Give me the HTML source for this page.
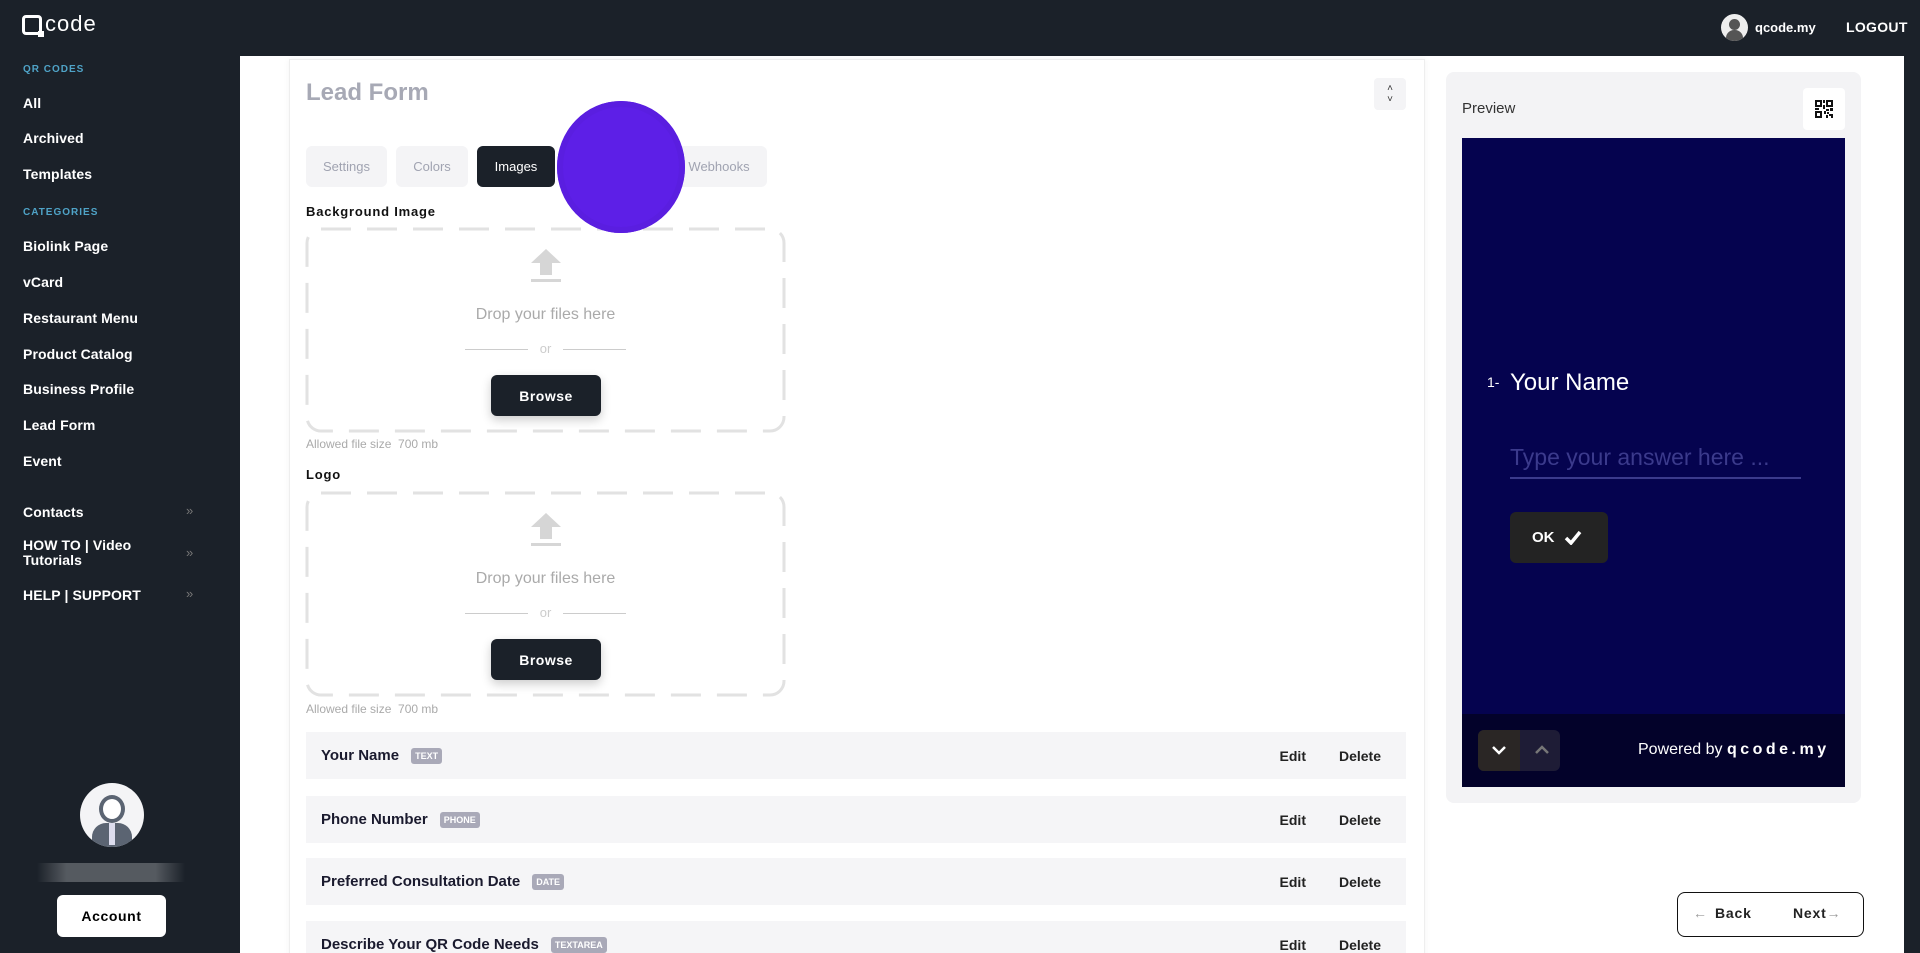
<!DOCTYPE html>
<html style="overflow:hidden"><head><meta charset="utf-8"><style>
*{box-sizing:border-box;margin:0;padding:0}
html,body{width:1920px;height:953px;overflow:hidden}
body{background:#fff;font-family:"Liberation Sans",sans-serif;position:relative}
.a{position:absolute}
.top{left:0;top:0;width:1920px;height:56px;background:#1b2129}
.side{left:0;top:0;width:240px;height:953px;background:#1b2129}
.rs{left:1904px;top:0;width:16px;height:953px;background:#1b2129}
.si{left:23px;color:#fff;font-size:14px;font-weight:bold;letter-spacing:.1px}
.sh{left:23px;color:#4fa3c7;font-size:10px;font-weight:bold;letter-spacing:1px}
.chev{left:186px;color:#777;font-size:13px}
.card{left:289px;top:59px;width:1136px;height:900px;border:1px solid #eee;box-shadow:0 0 6px rgba(0,0,0,.05);background:#fff}
.tab{top:146px;height:41px;border-radius:6px;background:#f4f4f6;color:#a0a3b1;font-size:13px;display:flex;align-items:center;justify-content:center}
.lbl{left:306px;font-size:13px;font-weight:bold;color:#111;letter-spacing:.8px}
.drop{left:306px;width:479px;text-align:center;color:#aaa;font-size:16px}
.br{left:491px;width:110px;height:41px;background:#1b2129;color:#fff;border-radius:6px;font-weight:bold;font-size:14px;display:flex;align-items:center;justify-content:center;box-shadow:0 4px 10px rgba(0,0,0,.2);letter-spacing:.5px}
.al{left:306px;font-size:12px;color:#aaa}
.row{left:306px;width:1100px;height:47px;background:#f5f5f7;display:flex;align-items:center;padding-left:15px}
.row b{font-size:15px;color:#1a1a2e}
.bd{background:#a9a9b8;color:#fff;font-size:9px;font-weight:bold;padding:3px 4px;border-radius:3px;margin-left:12px}
.ed{position:absolute;right:100px;font-size:14px;font-weight:bold;color:#222}
.de{position:absolute;right:25px;font-size:14px;font-weight:bold;color:#222}
</style></head><body>
<div class="a top"></div>
<div class="a side"></div>
<div class="a rs"></div>
<div class="a" style="left:22px;top:15px;width:20px;height:20px;border:3px solid #fff;border-radius:4px"></div>
<div class="a" style="left:38px;top:31px;width:6px;height:6px;background:#fff"></div>
<div class="a" style="left:45px;top:11px;color:#fff;font-size:22px;letter-spacing:1px">code</div>
<div class="a sh" style="top:64px">QR CODES</div>
<div class="a si" style="top:95px">All</div>
<div class="a si" style="top:130px">Archived</div>
<div class="a si" style="top:166px">Templates</div>
<div class="a sh" style="top:207px">CATEGORIES</div>
<div class="a si" style="top:238px">Biolink Page</div>
<div class="a si" style="top:274px">vCard</div>
<div class="a si" style="top:310px">Restaurant Menu</div>
<div class="a si" style="top:346px">Product Catalog</div>
<div class="a si" style="top:381px">Business Profile</div>
<div class="a si" style="top:417px">Lead Form</div>
<div class="a si" style="top:453px">Event</div>
<div class="a si" style="top:504px">Contacts</div><div class="a chev" style="top:503px">»</div>
<div class="a si" style="top:538px;line-height:15px">HOW TO | Video<br>Tutorials</div><div class="a chev" style="top:545px">»</div>
<div class="a si" style="top:587px">HELP | SUPPORT</div><div class="a chev" style="top:586px">»</div>
<div class="a" style="left:80px;top:783px;width:64px;height:64px;border-radius:50%;background:#f4f4f6;overflow:hidden">
<div class="a" style="left:19px;top:12px;width:26px;height:28px;border-radius:50%;background:#fff;border:4px solid #5b6472"></div>
<div class="a" style="left:12px;top:40px;width:40px;height:24px;border-radius:14px 14px 0 0;background:#5b6472"></div>
<div class="a" style="left:29px;top:40px;width:6px;height:22px;background:#dde"></div></div>
<div class="a" style="left:37px;top:863px;width:148px;height:19px;background:linear-gradient(90deg,#1b2129,#555a60 20%,#555a60 80%,#1b2129)"></div>
<div class="a" style="left:57px;top:895px;width:109px;height:42px;background:#fff;border-radius:6px;display:flex;align-items:center;justify-content:center;font-weight:bold;font-size:14px;letter-spacing:.6px">Account</div>
<div class="a" style="left:1721px;top:14px;width:27px;height:27px;border-radius:50%;background:#eee;overflow:hidden"><div class="a" style="left:8px;top:5px;width:11px;height:11px;border-radius:50%;background:#555"></div><div class="a" style="left:5px;top:16px;width:17px;height:12px;border-radius:8px 8px 0 0;background:#555"></div></div>
<div class="a" style="left:1755px;top:20px;color:#fff;font-weight:bold;font-size:13px">qcode.my</div>
<div class="a" style="left:1846px;top:19px;color:#fff;font-weight:bold;font-size:14px;letter-spacing:.3px">LOGOUT</div>
<div class="a card"></div>
<div class="a" style="left:306px;top:79px;font-size:24px;font-weight:bold;color:#a7a9b5">Lead Form</div>
<div class="a" style="left:1374px;top:78px;width:32px;height:32px;background:#f4f4f6;border-radius:4px;text-align:center;font-size:10px;line-height:11px;padding-top:5px;color:#333">˄<br>˅</div>
<div class="a tab" style="left:306px;width:81px">Settings</div>
<div class="a tab" style="left:396px;width:72px">Colors</div>
<div class="a tab" style="left:477px;width:78px;background:#1b2129;color:#fff">Images</div>
<div class="a tab" style="left:567px;width:97px"></div>
<div class="a tab" style="left:671px;width:96px">Webhooks</div>
<div class="a lbl" style="top:204px">Background Image</div>
<svg class="a" style="left:305px;top:227px" width="482" height="207"><rect x="2" y="2" width="477" height="202" rx="14" fill="none" stroke="#e2e2e2" stroke-width="3" stroke-dasharray="30 16"/></svg>
<svg class="a" style="left:531px;top:249px" width="30" height="34" viewBox="0 0 30 34"><path d="M15 0 L30 14 L21 14 L21 26 L9 26 L9 14 L0 14Z" fill="#d6d6d6"/><rect x="0" y="30" width="30" height="3" fill="#d6d6d6"/></svg>
<div class="a drop" style="top:306px">Drop your files here</div>
<div class="a" style="left:465px;top:349px;width:63px;height:1px;background:#ccc"></div>
<div class="a" style="left:563px;top:349px;width:63px;height:1px;background:#ccc"></div>
<div class="a drop" style="top:341px;font-size:13px;color:#ccc">or</div>
<div class="a br" style="top:375px">Browse</div>
<div class="a al" style="top:437px">Allowed file size &nbsp;700 mb</div>
<div class="a lbl" style="top:467px">Logo</div>
<svg class="a" style="left:305px;top:491px" width="482" height="207"><rect x="2" y="2" width="477" height="202" rx="14" fill="none" stroke="#e2e2e2" stroke-width="3" stroke-dasharray="30 16"/></svg>
<svg class="a" style="left:531px;top:513px" width="30" height="34" viewBox="0 0 30 34"><path d="M15 0 L30 14 L21 14 L21 26 L9 26 L9 14 L0 14Z" fill="#d6d6d6"/><rect x="0" y="30" width="30" height="3" fill="#d6d6d6"/></svg>
<div class="a drop" style="top:570px">Drop your files here</div>
<div class="a" style="left:465px;top:613px;width:63px;height:1px;background:#ccc"></div>
<div class="a" style="left:563px;top:613px;width:63px;height:1px;background:#ccc"></div>
<div class="a drop" style="top:605px;font-size:13px;color:#ccc">or</div>
<div class="a br" style="top:639px">Browse</div>
<div class="a al" style="top:702px">Allowed file size &nbsp;700 mb</div>
<div class="a" style="left:557px;top:101px;width:128px;height:132px;border-radius:50%;background:#5d1fe7;box-shadow:inset 0 0 0 6px #5a1ee0"></div>
<div class="a row" style="top:732px"><b>Your Name</b><span class="bd">TEXT</span><span class="ed">Edit</span><span class="de">Delete</span></div>
<div class="a row" style="top:796px"><b>Phone Number</b><span class="bd">PHONE</span><span class="ed">Edit</span><span class="de">Delete</span></div>
<div class="a row" style="top:858px"><b>Preferred Consultation Date</b><span class="bd">DATE</span><span class="ed">Edit</span><span class="de">Delete</span></div>
<div class="a row" style="top:921px"><b>Describe Your QR Code Needs</b><span class="bd">TEXTAREA</span><span class="ed">Edit</span><span class="de">Delete</span></div>
<div class="a" style="left:1446px;top:72px;width:415px;height:731px;background:#f3f3f5;border-radius:8px"></div>
<div class="a" style="left:1462px;top:100px;font-size:15px;color:#333">Preview</div>
<div class="a" style="left:1803px;top:88px;width:42px;height:42px;background:#fff;border-radius:4px"></div>
<svg class="a" style="left:1815px;top:100px" width="18" height="18" viewBox="0 0 18 18" fill="#111"><path d="M0 0h7v7H0zM2 2v3h3V2zM11 0h7v7h-7zM13 2v3h3V2zM0 11h7v7H0zM2 13v3h3v-3zM8 0h2v3H8zM8 5h2v4H8zM0 8h4v2H0zM11 9h3v2h-3zM15 8h3v3h-3zM9 11h2v3H9zM12 12h2v2h-2zM14 14h4v2h-4zM11 15h2v3h-2zM16 16h2v2h-2z"/></svg>
<div class="a" style="left:1462px;top:138px;width:383px;height:649px;background:#05034f"></div>
<div class="a" style="left:1462px;top:714px;width:383px;height:73px;background:#03022a"></div>
<div class="a" style="left:1487px;top:374px;color:#fff;font-size:14px">1-</div>
<div class="a" style="left:1510px;top:369px;color:#fff;font-size:24px">Your Name</div>
<div class="a" style="left:1510px;top:444px;color:#3b3a8c;font-size:23px">Type your answer here ...</div>
<div class="a" style="left:1510px;top:477px;width:291px;height:2px;background:#3b3a8c"></div>
<div class="a" style="left:1510px;top:512px;width:98px;height:51px;background:#232323;border-radius:6px"></div>
<div class="a" style="left:1532px;top:529px;color:#fff;font-weight:bold;font-size:15px">OK</div>
<svg class="a" style="left:1564px;top:530px" width="18" height="15" viewBox="0 0 18 15"><path d="M2 8l5 5L16 2" stroke="#fff" stroke-width="3.5" fill="none"/></svg>
<div class="a" style="left:1478px;top:730px;width:82px;height:41px;background:#1e1c36;border-radius:6px"></div>
<div class="a" style="left:1478px;top:730px;width:42px;height:41px;background:#2a2625;border-radius:6px 0 0 6px"></div>
<svg class="a" style="left:1490px;top:743px" width="18" height="14" viewBox="0 0 18 14"><path d="M3 4l6 6 6-6" stroke="#fff" stroke-width="2.5" fill="none"/></svg>
<svg class="a" style="left:1533px;top:743px" width="18" height="14" viewBox="0 0 18 14"><path d="M3 10l6-6 6 6" stroke="#777" stroke-width="2.5" fill="none"/></svg>
<div class="a" style="left:1638px;top:741px;color:#fff;font-size:16px">Powered by <b style="letter-spacing:3.5px">qcode.my</b></div>
<div class="a" style="left:1677px;top:892px;width:187px;height:45px;border:1.5px solid #111;border-radius:8px"></div>
<div class="a" style="left:1693px;top:905px;font-size:14px;color:#999">←</div>
<div class="a" style="left:1715px;top:905px;font-size:14px;font-weight:bold;color:#222;letter-spacing:.8px">Back</div>
<div class="a" style="left:1793px;top:905px;font-size:14px;font-weight:bold;color:#222;letter-spacing:.8px">Next<span style="color:#999;font-weight:normal">→</span></div>
</body></html>
